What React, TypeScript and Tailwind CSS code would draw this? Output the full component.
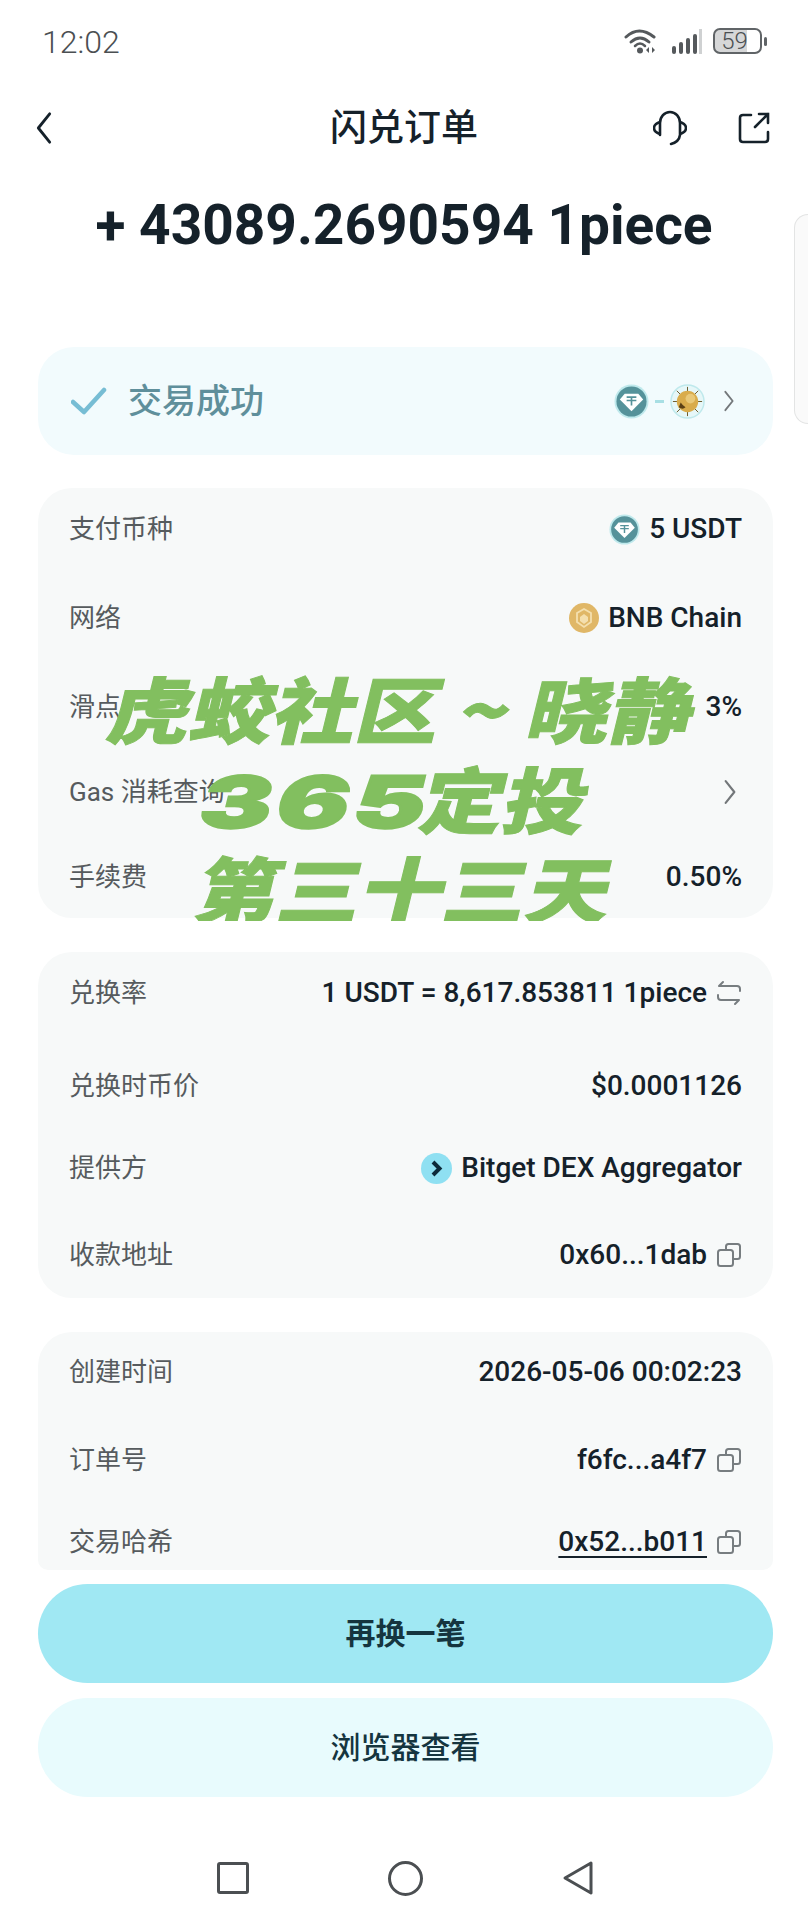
import type { ReactNode } from 'react'

const font = "font-['Roboto','Noto_Sans_CJK_SC',sans-serif]"

function Chevron({ className }: { className?: string }) {
  return (
    <svg viewBox="0 0 12 24" fill="none" className={className}>
      <path d="M2 2 L10 12 L2 22" stroke="currentColor" strokeWidth="2" strokeLinecap="round" strokeLinejoin="round" />
    </svg>
  )
}

function CopyIcon() {
  return (
    <svg viewBox="0 0 26 26" fill="none" className="w-[26px] h-[26px] text-[#777d80]">
      <path d="M10 7V4.5A2.5 2.5 0 0 1 12.500 2h9A2.500 2.500 0 0 1 24 4.500v10a2.500 2.500 0 0 1-2.500 2.500H18" stroke="currentColor" strokeWidth="2" />
      <rect x="2" y="8" width="15" height="16" rx="2.500" stroke="currentColor" strokeWidth="2" />
    </svg>
  )
}

function SwapIcon() {
  return (
    <svg viewBox="0 0 26 26" fill="none" className="w-[26px] h-[26px] text-[#777d80]">
      <path d="M7 2 L3 6 H21 Q24 6 24 9 V11" stroke="currentColor" strokeWidth="2" strokeLinecap="round" strokeLinejoin="round" />
      <path d="M19 24 L23 20 H5 Q2 20 2 17 V15" stroke="currentColor" strokeWidth="2" strokeLinecap="round" strokeLinejoin="round" />
    </svg>
  )
}

function TetherIcon({ size }: { size: string }) {
  return (
    <svg viewBox="0 0 36 36" className={size}>
      <circle cx="18" cy="18" r="17.500" fill="#bfe9ec" />
      <circle cx="18" cy="18" r="15.500" fill="#55929a" />
      <path d="M11 10 H25 L30 16 L18 28 L6 16 Z" fill="#ffffff" />
      <path d="M13 13.500 H23 M18 13.500 V22 M13 17 H23" stroke="#55929a" strokeWidth="1.700" />
    </svg>
  )
}

function PieceIcon() {
  return (
    <svg viewBox="0 0 36 36" className="w-[35px] h-[35px]">
      <circle cx="18" cy="18" r="17" fill="#e6f7f8" stroke="#bfe9ec" strokeWidth="1.500" />
      <path d="M18 3 V8 M18 28 V33 M3 18 H8 M28 18 H33 M7 7 L11 11 M29 7 L25 11 M7 29 L11 25 M29 29 L25 25" stroke="#6b5a2a" strokeWidth="1" />
      <circle cx="18" cy="18" r="11" fill="#d9ac4c" />
      <circle cx="21" cy="15" r="5" fill="#e9c979" />
      <path d="M9 24 Q13 27 16 24 Q13 22 11 19 Z" fill="#5b4015" />
    </svg>
  )
}

function BnbIcon() {
  return (
    <svg viewBox="0 0 30 30" className="w-[30px] h-[30px]">
      <circle cx="15" cy="15" r="15" fill="#e0b767" />
      <path d="M15 6 L22 10 V19 L15 24 L8 19 V10 Z" fill="none" stroke="#f4dfae" strokeWidth="1.800" />
      <path d="M15 11 L19 14 V18 L15 21 L11 18 V14 Z" fill="#f4dfae" />
    </svg>
  )
}

function BitgetIcon() {
  return (
    <svg viewBox="0 0 31 31" className="w-[31px] h-[31px]">
      <circle cx="15.500" cy="15.500" r="15.500" fill="#8fe0f2" />
      <path d="M12 9 L18.500 15.500 L12 22" fill="none" stroke="#0d2a3a" strokeWidth="4" />
    </svg>
  )
}

function Row({ label, className, children }: { label: string; className: string; children: ReactNode }) {
  return (
    <div className={`flex items-center justify-between ${className}`}>
      <span className="text-[26px] leading-none text-[#565b5e]">{label}</span>
      <div className="flex items-center gap-[9px] text-[28px] leading-none font-medium text-[#15212a]">{children}</div>
    </div>
  )
}

function Card({ className, children }: { className: string; children: ReactNode }) {
  return <div className={`bg-[#f7f9f9] rounded-[34px] px-[31px] ${className}`}>{children}</div>
}

export default function App() {
  return (
    <div className={`${font} relative w-[808px] h-[1920px] overflow-hidden bg-white`}>
      {/* status bar */}
      <div className="h-[84px] flex items-start justify-between pl-[42px] pr-[41px] pt-[24px]">
        <span className="text-[32px] leading-9 font-light text-[#4b4f52]">12:02</span>
        <div className="flex items-center gap-[13px] pt-[4px] text-[#55595c]">
          <svg viewBox="0 0 34 26" className="w-[34px] h-[26px]" fill="none">
            <path d="M2 9 Q15 -3 30 9" stroke="currentColor" strokeWidth="3" strokeLinecap="round" />
            <path d="M7 14 Q16 6 25 14" stroke="currentColor" strokeWidth="3" strokeLinecap="round" />
            <path d="M11 18 Q16 13 21 18" stroke="currentColor" strokeWidth="2.500" strokeLinecap="round" />
            <circle cx="16" cy="22.500" r="3" fill="currentColor" />
            <path d="M25 19 L22 22 L25 25 Z M28 19 L31 22 L28 25 Z" fill="currentColor" />
          </svg>
          <svg viewBox="0 0 32 26" className="w-[32px] h-[26px]">
            <rect x="1" y="18" width="4" height="8" rx="2" fill="currentColor" />
            <rect x="8" y="14" width="4" height="12" rx="2" fill="currentColor" />
            <rect x="15" y="10" width="4" height="16" rx="2" fill="currentColor" />
            <rect x="22" y="6" width="4" height="20" rx="2" fill="currentColor" />
            <rect x="28" y="1" width="3" height="25" fill="#cfd1d2" />
          </svg>
          <div className="flex items-center gap-[2px] -ml-[3px]">
            <div className="w-[49px] h-[26px] rounded-[7px] border-2 border-[#606467] bg-[linear-gradient(90deg,#d6d7d8_72%,#ffffff_72%)] flex items-center justify-center">
              <span className="text-[24px] leading-none font-light text-[#4b4f52] -ml-[6px]">59</span>
            </div>
            <div className="w-[3px] h-[9px] bg-[#606467] rounded-sm" />
          </div>
        </div>
      </div>

      {/* header */}
      <div className="h-[88px] flex items-center justify-between pl-[35px] pr-[38px]">
        <Chevron className="w-[18px] h-[34px] rotate-180 text-[#15212a]" />
        <span className="absolute left-0 right-0 text-center text-[37px] leading-none font-medium text-[#15212a] pointer-events-none">闪兑订单</span>
        <div className="flex items-center gap-[51px]">
          <svg viewBox="0 0 34 36" fill="none" className="w-[34px] h-[36px] text-[#15212a]">
            <path d="M7 25 V13 A10 11 0 0 1 27 13 V25 Q26 32 18 34" stroke="currentColor" strokeWidth="2.600" strokeLinecap="round" />
            <path d="M7 12 Q1 14 1 18 Q1 22 7 24 M27 12 Q33 14 33 18 Q33 22 27 24" stroke="currentColor" strokeWidth="2.600" />
          </svg>
          <svg viewBox="0 0 32 32" fill="none" className="w-[32px] h-[32px] text-[#15212a]">
            <path d="M13 3 H5 Q2 3 2 6 V27 Q2 30 5 30 H27 Q30 30 30 27 V20" stroke="currentColor" strokeWidth="2.600" strokeLinecap="round" />
            <path d="M17 15 L30 2 M21 2 H30 V11" stroke="currentColor" strokeWidth="2.600" strokeLinecap="round" />
          </svg>
        </div>
      </div>

      {/* amount */}
      <div className="h-[106px] flex items-center justify-center">
        <span className="text-[55px] leading-none font-bold text-[#15212a]">+ 43089.2690594 1piece</span>
      </div>

      {/* side panel peeking in from the right */}
      <div className="absolute top-[214px] right-0 w-[14px] h-[210px] bg-[#fafafa] border border-r-0 border-[#e3e4e4] rounded-l-[22px]" />

      <div className="pl-[38px] pr-[35px] pt-[69px]">
        <div className="h-[108px] bg-[#f2fbfd] rounded-[36px] flex items-center justify-between pl-[33px] pr-[38px]">
          <div className="flex items-center gap-[21px]">
            <svg viewBox="0 0 36 28" fill="none" className="w-[36px] h-[28px]">
              <path d="M2 15 L13 25 L33 3" stroke="#77bdd4" strokeWidth="4.500" strokeLinecap="round" strokeLinejoin="round" />
            </svg>
            <span className="text-[34px] leading-none font-medium text-[#5f8f9b]">交易成功</span>
          </div>
          <div className="flex items-center">
            <TetherIcon size="w-[35px] h-[35px]" />
            <div className="w-[9px] h-[3px] bg-[#a8dfe4] mx-[6px]" />
            <PieceIcon />
            <Chevron className="w-[12px] h-[22px] ml-[18px] text-[#73777a]" />
          </div>
        </div>

        <Card className="mt-[33px]">
          <Row label="支付币种" className="h-[82px]">
            <TetherIcon size="w-[31px] h-[31px]" />
            <span>5 USDT</span>
          </Row>
          <Row label="网络" className="h-[96px]">
            <BnbIcon />
            <span>BNB Chain</span>
          </Row>
          <Row label="滑点" className="h-[82px]">
            <span>3%</span>
          </Row>
          <Row label="Gas 消耗查询" className="h-[88px]">
            <Chevron className="w-[14px] h-[26px] mr-[5px] text-[#73777a]" />
          </Row>
          <Row label="手续费" className="h-[82px]">
            <span>0.50%</span>
          </Row>
        </Card>

        <Card className="mt-[34px]">
          <Row label="兑换率" className="h-[82px]">
            <span>1 USDT = 8,617.853811 1piece</span>
            <SwapIcon />
          </Row>
          <Row label="兑换时币价" className="h-[104px]">
            <span>$0.0001126</span>
          </Row>
          <Row label="提供方" className="h-[60px]">
            <BitgetIcon />
            <span>Bitget DEX Aggregator</span>
          </Row>
          <Row label="收款地址" className="h-[100px] pt-[14px]">
            <span>0x60...1dab</span>
            <CopyIcon />
          </Row>
        </Card>

        <Card className="mt-[34px] rounded-b-[10px]">
          <Row label="创建时间" className="h-[80px]">
            <span>2026-05-06 00:02:23</span>
          </Row>
          <Row label="订单号" className="h-[96px]">
            <span>f6fc...a4f7</span>
            <CopyIcon />
          </Row>
          <Row label="交易哈希" className="h-[62px] pt-[6px]">
            <span className="underline underline-offset-[5px] decoration-2">0x52...b011</span>
            <CopyIcon />
          </Row>
        </Card>

        <div className="mt-[14px] h-[99px] rounded-full bg-[#a0e8f3] flex items-center justify-center text-[30px] leading-none font-semibold text-[#15353f]">
          再换一笔
        </div>
        <div className="mt-[15px] h-[99px] rounded-full bg-[#e8fbfd] flex items-center justify-center text-[30px] leading-none font-medium text-[#15353f]">
          浏览器查看
        </div>
      </div>

      {/* navigation bar */}
      <div className="mt-[63px] flex items-center justify-center gap-[139px] pl-[2px] text-[#4b4f52]">
        <div className="w-[32px] h-[32px] border-[3px] border-current rounded-[3px]" />
        <div className="w-[35px] h-[35px] border-[3px] border-current rounded-full" />
        <svg viewBox="0 0 32 36" fill="none" className="w-[32px] h-[36px]">
          <path d="M29 3 L3 18 L29 33 Z" stroke="currentColor" strokeWidth="3" strokeLinejoin="round" />
        </svg>
      </div>

      {/* watermark over the first card, cut off at its lower edge */}
      <div className="absolute left-0 top-[662px] w-full h-[259px] overflow-hidden flex flex-col items-center text-[#82bf5f] font-['Noto_Sans_CJK_SC',sans-serif] font-black text-[72px] leading-[90px] whitespace-nowrap [-webkit-text-stroke:1px_#82bf5f]">
        <div className="h-[90px] shrink-0 -skew-x-12 scale-x-[1.15]">虎蛟社区 ~ 晓静</div>
        <div className="h-[90px] shrink-0 -skew-x-12 scale-x-[1.15] pr-[6px]">
          <span className="inline-block scale-x-[1.3] mx-[16px] tracking-[3px] font-['Inter',sans-serif] font-black [-webkit-text-stroke:2px_#82bf5f]">365</span>定投
        </div>
        <div className="h-[90px] shrink-0 -skew-x-12 scale-x-[1.15] pl-[4px]">第三十三天</div>
      </div>
    </div>
  )
}
